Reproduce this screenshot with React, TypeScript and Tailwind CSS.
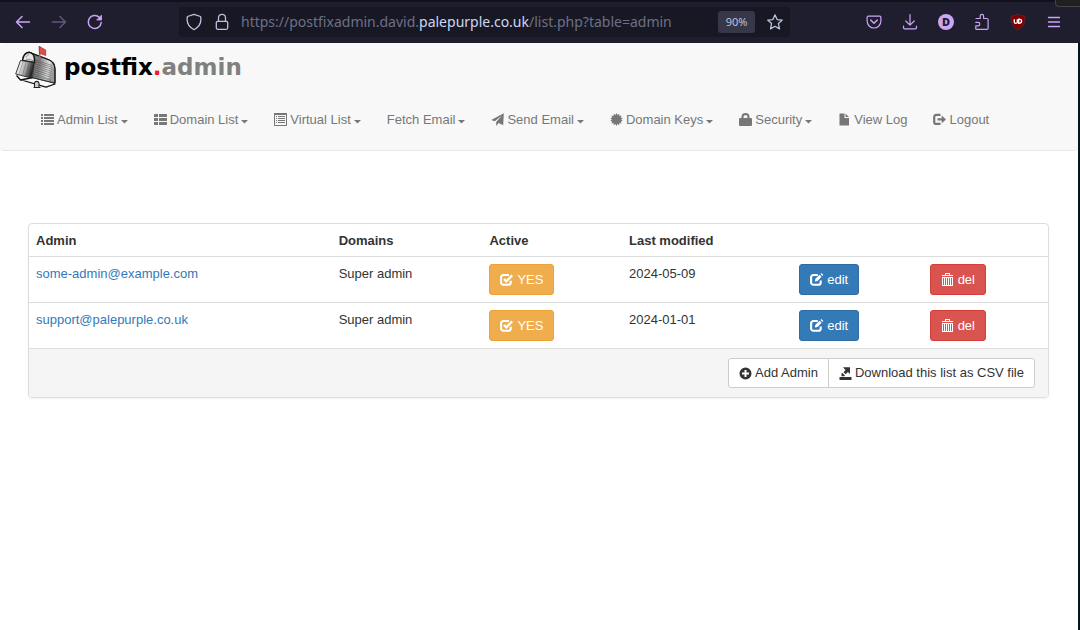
import type { ReactNode } from "react";

type IconName =
  | "list"
  | "thList"
  | "listAlt"
  | "send"
  | "certificate"
  | "lock"
  | "file"
  | "logout"
  | "check"
  | "edit"
  | "trash"
  | "plus"
  | "export";

const burst = Array.from({ length: 28 }, (_, i) => {
  const angle = (i * Math.PI) / 14;
  const r = i % 2 ? 4.6 : 6.5;
  return `${(6.5 + r * Math.sin(angle)).toFixed(2)},${(6.5 - r * Math.cos(angle)).toFixed(2)}`;
}).join(" ");

const glyphs: Record<IconName, ReactNode> = {
  list: (
    <path d="M0 1h2v2H0zM3 1h10v2H3zM0 4h2v2H0zM3 4h10v2H3zM0 7h2v2H0zM3 7h10v2H3zM0 10h2v2H0zM3 10h10v2H3z" />
  ),
  thList: (
    <path d="M.5 1H4v3H0V1.500zM5 1h7.500l.5.5V4H5zM0 5h4v3H0zM5 5h8v3H5zM0 9h4v3H.5L0 11.500zM5 9h8v2.500l-.5.5H5z" />
  ),
  listAlt: (
    <path
      fillRule="evenodd"
      d="M.5 0h12l.5.5v12l-.5.5H.5l-.5-.5V.5zM1 2v10h11V2zM2 3h1v1H2zM4 3h7v1H4zM2 5h1v1H2zM4 5h7v1H4zM2 7h1v1H2zM4 7h7v1H4zM2 9h1v1H2zM4 9h7v1H4z"
    />
  ),
  send: <path d="M12.800.2 12.200 12.200 7.600 10 5.200 12.900V9L11 2.500 3.700 8.300.2 6.900z" />,
  certificate: <polygon points={burst} />,
  lock: (
    <path
      fillRule="evenodd"
      d="M2.500 5V4a4 4 0 0 1 8 0v1h1.700l.8.8v6.400l-.8.8H.8l-.8-.8V5.800L.8 5zM4.500 5h4V4a2 2 0 0 0-4 0z"
    />
  ),
  file: <path d="M1.500.5h5V5H11v7.500H1.500zM7.500.5 11 4H7.500z" />,
  logout: (
    <>
      <path
        d="M7.500 1.900H3.200A2 2 0 0 0 1.200 3.900v5a2 2 0 0 0 2 2h4.300"
        fill="none"
        stroke="currentColor"
        strokeWidth="2.200"
      />
      <path d="M4.500 5.200h4.200V2.500L13 6.400 8.700 10.300V7.600H4.500z" />
    </>
  ),
  check: (
    <>
      <path
        d="M9 2H3.400A2.300 2.300 0 0 0 1.100 4.300v5.200a2.300 2.300 0 0 0 2.300 2.300h5a2.300 2.300 0 0 0 2.300-2.300V7.700"
        fill="none"
        stroke="currentColor"
        strokeWidth="2.100"
      />
      <path d="m4 6 2.300 2.300L12.200 2.400" fill="none" stroke="currentColor" strokeWidth="2.300" />
    </>
  ),
  edit: (
    <>
      <path
        d="M7.800 2H3.400A2.300 2.300 0 0 0 1.100 4.300v5.200a2.300 2.300 0 0 0 2.300 2.300h5a2.300 2.300 0 0 0 2.300-2.300V7.500"
        fill="none"
        stroke="currentColor"
        strokeWidth="2.100"
      />
      <path d="m4.800 8.500.6-2.700 4.200-4.100 2 2-4.100 4.200zM10.500.9l.8-.8 2 2-.8.8z" />
    </>
  ),
  trash: (
    <path
      fillRule="evenodd"
      d="M4 0h5v2h3v1H1V2h3zM5 1v1h3V1zM1 4h11v9H1zM2 5v7h1V5zM4 5v7h1V5zM6 5v7h1V5zM8 5v7h1V5zM10 5v7h1V5z"
    />
  ),
  plus: (
    <path
      fillRule="evenodd"
      d="M6.500.5a6 6 0 1 1 0 12 6 6 0 0 1 0-12zM5.500 3v2.500H3v2h2.500V10h2V7.500H10v-2H7.500V3z"
    />
  ),
  export: (
    <path d="M4 .3h7V7L8.900 5 6.600 7.300l-2-2L6.500 3zM3.200 5.800 6 8.500 5.200 9.300H2.500V6.500zM.5 10h12v3H.5z" />
  ),
};

function Icon({ name }: { name: IconName }) {
  return (
    <svg viewBox="0 0 13 13" className="size-[13px] shrink-0 overflow-visible" fill="currentColor" aria-hidden="true">
      {glyphs[name]}
    </svg>
  );
}

function Caret() {
  return (
    <svg viewBox="0 0 7 4" className="mt-1 h-1 w-[7px]" fill="currentColor" aria-hidden="true">
      <path d="M0 0h7L3.500 3.600z" />
    </svg>
  );
}

const menu: { label: string; icon?: IconName; caret?: boolean }[] = [
  { label: "Admin List", icon: "list", caret: true },
  { label: "Domain List", icon: "thList", caret: true },
  { label: "Virtual List", icon: "listAlt", caret: true },
  { label: "Fetch Email", caret: true },
  { label: "Send Email", icon: "send", caret: true },
  { label: "Domain Keys", icon: "certificate", caret: true },
  { label: "Security", icon: "lock", caret: true },
  { label: "View Log", icon: "file" },
  { label: "Logout", icon: "logout" },
];

const admins = [
  { email: "some-admin@example.com", domains: "Super admin", modified: "2024-05-09" },
  { email: "support@palepurple.co.uk", domains: "Super admin", modified: "2024-01-01" },
];

function ToolButton({ label, children, dim }: { label: string; children: ReactNode; dim?: boolean }) {
  return (
    <button
      type="button"
      aria-label={label}
      disabled={dim}
      className="flex size-9 shrink-0 items-center justify-center text-[#cba6f7] disabled:opacity-40"
    >
      <svg
        viewBox="0 0 16 16"
        className="size-4 overflow-visible"
        fill="none"
        stroke="currentColor"
        strokeWidth="1.200"
        strokeLinecap="round"
        strokeLinejoin="round"
      >
        {children}
      </svg>
    </button>
  );
}

function BrowserBar() {
  return (
    <header className="relative flex h-[43px] items-center border-t-2 border-[#11111b] bg-[#1e1e2e] pr-2 pb-px pl-[5px] font-['Noto_Sans',sans-serif]">
      <div className="absolute -top-0.5 right-0 h-[7px] w-[25px] rounded-bl border-b border-l border-[#454545] bg-[#202020]" />
      <ToolButton label="Back">
        <path d="M14.500 8h-13M7 2.500 1.500 8 7 13.500" strokeWidth="1.500" />
      </ToolButton>
      <ToolButton label="Forward" dim>
        <path d="M1.500 8h13M9 2.500 14.500 8 9 13.500" strokeWidth="1.500" />
      </ToolButton>
      <ToolButton label="Reload">
        <path d="M14.200 8.500A6.500 6.500 0 1 1 12.300 3.300L14 5" strokeWidth="1.500" />
        <path d="M14.500 1.500V6H10z" fill="currentColor" strokeWidth=".8" />
      </ToolButton>
      <div className="ml-[66px] flex h-[30px] w-[611px] items-center rounded bg-[#181825] pr-[7px] pl-[7px] text-[#bac2de]">
        <svg viewBox="0 0 16 16" className="size-4 overflow-visible" fill="none" stroke="currentColor" strokeWidth="1.300" strokeLinejoin="round">
          <path d="M8 .3 14.500 2.500c.3.900.4 2 .4 3 0 4.500-2.800 8-6.900 10.200C3.900 13.500 1.100 10 1.100 5.500c0-1 .1-2.100.4-3z" />
        </svg>
        <svg viewBox="0 0 16 16" className="ml-3 size-4 overflow-visible" fill="none" stroke="currentColor" strokeWidth="1.300">
          <rect x="2.300" y="7.300" width="11.400" height="8" rx="1.500" />
          <path d="M4.500 7.300V3.800a3.500 3.500 0 0 1 7 0v3.500" />
        </svg>
        <div
          role="textbox"
          aria-label="Address"
          tabIndex={0}
          className="ml-[11px] min-w-0 flex-1 pb-px text-sm whitespace-nowrap text-[#6c7086]"
        >
          https://postfixadmin.david.<span className="text-[#cdd6f4]">palepurple.co.uk</span>/list.php?table=admin
        </div>
        <button type="button" className="h-[22px] w-[37px] rounded-[3px] bg-[#363748] text-[11px] text-[#bac2de]">
          90%
        </button>
        <button type="button" aria-label="Bookmark" className="ml-3 flex size-4 items-center">
          <svg viewBox="0 0 16 16" className="size-4 overflow-visible" fill="none" stroke="currentColor" strokeWidth="1.300" strokeLinejoin="round">
            <path d="m8 .8 2.100 4.800 5.200.5-3.900 3.500 1.100 5.300L8 12.300l-4.500 2.600 1.100-5.300L.7 6.100l5.200-.5z" />
          </svg>
        </button>
      </div>
      <div className="ml-auto flex">
        <ToolButton label="Pocket">
          <path d="M2.300 2.200h11.400a1.200 1.200 0 0 1 1.200 1.200v3.700a6.900 6.900 0 0 1-13.800 0V3.400a1.200 1.200 0 0 1 1.200-1.200z" />
          <path d="M4.700 6 8 9.300 11.300 6" strokeWidth="1.500" />
        </ToolButton>
        <ToolButton label="Downloads">
          <path d="M8 .5V11M3.800 7 8 11.200 12.200 7M1.500 12v1.500c0 .8.500 1.300 1.300 1.300h10.400c.8 0 1.300-.5 1.300-1.300V12" />
        </ToolButton>
        <button type="button" aria-label="Profile D" className="flex size-9 items-center justify-center">
          <span className="flex size-4 items-center justify-center rounded-full bg-[#cba6f7] text-[11px] leading-4 font-black text-[#1e1e2e]">
            D
          </span>
        </button>
        <ToolButton label="Extensions">
          <path d="M2 4.500h4.200V2a1.700 1.700 0 0 1 3.400 0v2.500h3.300c.7 0 1.200.5 1.200 1.200v8.500c0 .7-.5 1.200-1.200 1.200H2.500c-.4 0-.7-.3-.7-.7v-2.900h2.300a1.700 1.700 0 0 0 0-3.400H1.800" />
        </ToolButton>
        <button type="button" aria-label="Content blocker" className="flex size-9 items-center justify-center">
          <svg viewBox="0 0 16 16" className="size-4 overflow-visible">
            <path d="M8 0c2 1.300 4.300 1.900 7 2 0 6.500-.5 10-7 14C1.500 12 1 8.500 1 2c2.700-.1 5-.7 7-2z" fill="#800000" stroke="#5b3344" strokeWidth=".6" />
            <path d="M4.300 5.200v3c0 1.500 3 1.500 3 0v-3M8.700 5.200v4.100c3.900 0 3.900-4.100 0-4.100z" fill="none" stroke="#fff" strokeWidth="1.300" />
          </svg>
        </button>
        <ToolButton label="Menu">
          <path d="M2.500 3.500h11M2.500 8h11M2.500 12.500h11" strokeWidth="1.300" />
        </ToolButton>
      </div>
    </header>
  );
}

function Mailbox() {
  return (
    <svg viewBox="0 0 42 44" className="h-11 w-[42px] shrink-0" aria-hidden="true">
      <defs>
        <linearGradient id="door" x1="0" x2="1" y1="0" y2=".3">
          <stop offset="0" stopColor="#666" />
          <stop offset=".25" stopColor="#f0f0f0" />
          <stop offset=".6" stopColor="#aaa" />
          <stop offset="1" stopColor="#222" />
        </linearGradient>
        <linearGradient id="side" x1="0" x2="1" y1=".1" y2=".3">
          <stop offset="0" stopColor="#666" />
          <stop offset=".45" stopColor="#888" />
          <stop offset=".8" stopColor="#ddd" />
          <stop offset="1" stopColor="#999" />
        </linearGradient>
      </defs>
      <path d="M1.500 30.500 5.500 35 18 32.500 38 37.500 40 39 31 42.200 6.500 35" fill="#fafafa" stroke="#111" strokeWidth="1.300" strokeLinejoin="round" />
      <path d="M14 7.200 32 14c6 2 8 5 8 10v14L17.500 32.500 19 17C20 12 18 8 14 7.200z" fill="url(#side)" stroke="#333" strokeWidth=".9" />
      <path
        d="M19 14.500l18 6M19.500 16.500l18 6M19.500 18.500l18 6M19 20.500l18 6M19 22.500l18 6M18.500 24.500l18 6M18.500 26.500l18 6M18 28.500l18 6M18 30.500l18 5"
        stroke="#222"
        strokeWidth=".6"
        strokeOpacity=".6"
      />
      <path d="M14 7.200 32 14c6 2 8 5 8 10v14" fill="none" stroke="#111" strokeWidth="1.200" />
      <path d="M7.500 15.500C8 11 10.500 7.500 14 7.200 18 7.500 20 11 19.500 17.500z" fill="#e5e5e5" stroke="#111" strokeWidth="1.400" />
      <path d="M11 12.500c.5-1.500 1.500-2.500 3-3M11 15c2-1 5-1 8 1.500" fill="none" stroke="#777" strokeWidth=".8" />
      <path d="M5.500 15.500 19 17.500 16.500 33 .7 29z" fill="url(#door)" stroke="#222" strokeWidth=".9" />
      <path d="M8 17 4 29M11 17.500 7.500 30M14 18l-3 13M16.500 18.500 14 32" stroke="#333" strokeWidth=".3" />
      <path d="M19.500 42.500v-4.300c.5-2.400 4-2.400 4.500 0v4.300M18.500 42.500h7" fill="#ccc" stroke="#222" strokeWidth="1.100" />
      <path d="M24.700 23V1.500" stroke="#9c6464" strokeWidth="1.600" />
      <path d="M24 1.300 30.700 5v5.500L24.500 8.300z" fill="#e04c4c" stroke="#843838" strokeWidth=".7" />
    </svg>
  );
}

const buttonBase = "inline-flex h-[31px] items-center gap-1 rounded-[3px] border px-2.5 align-top text-white";
const listButton =
  "inline-flex h-[30px] items-center gap-[3px] border border-[#cccccc] bg-white px-2.5 text-[#333333]";

export default function App() {
  return (
    <div className="min-h-screen bg-white font-['Liberation_Sans',Arial,sans-serif] text-[13px] leading-[18px] text-[#333333]">
      <BrowserBar />
      <div className="flex min-h-[calc(100vh-43px)] flex-col border-r-2 border-[#04161c]">
        <nav className="rounded border-b border-[#e7e7e7] bg-[#f8f8f8] pb-[5px]">
          <a href="#home" className="ml-[15px] inline-flex h-[45px] items-center gap-[7px] pt-0.5">
            <Mailbox />
            <span className="font-['DejaVu_Sans',sans-serif] text-[23px] leading-7 font-bold text-black">
              postfix<span className="text-[#ed1c24]">.</span>
              <span className="text-[#808080]">admin</span>
            </span>
          </a>
          <ul className="ml-7 flex flex-wrap">
            {menu.map(({ label, icon, caret }) => (
              <li key={label}>
                <a
                  href="#menu"
                  className="flex items-center gap-[3px] px-[13px] pt-[17px] pb-4 whitespace-nowrap text-[#777777]"
                >
                  {icon && <Icon name={icon} />}
                  {label}
                  {caret && <Caret />}
                </a>
              </li>
            ))}
          </ul>
        </nav>
        <main className="mt-[72px] mr-[29px] ml-7 overflow-hidden rounded border border-[#dddddd] shadow-xs">
          <table className="w-full table-fixed border-collapse text-left">
            <colgroup>
              <col className="w-[29.700%]" />
              <col className="w-[14.800%]" />
              <col className="w-[13.700%]" />
              <col className="w-[16.700%]" />
              <col className="w-[12.800%]" />
              <col />
            </colgroup>
            <thead>
              <tr className="h-[33px]">
                <th className="px-[7px] pt-0.5">Admin</th>
                <th className="px-[7px] pt-0.5">Domains</th>
                <th className="px-[7px] pt-0.5">Active</th>
                <th className="px-[7px] pt-0.5">Last modified</th>
                <td />
                <td />
              </tr>
            </thead>
            <tbody>
              {admins.map((admin) => (
                <tr key={admin.email} className="border-t border-[#dddddd] align-top">
                  <td className="px-[7px] pt-2">
                    <a href="#admin" className="text-[#337ab7]">
                      {admin.email}
                    </a>
                  </td>
                  <td className="px-[7px] pt-2">{admin.domains}</td>
                  <td className="p-[7px]">
                    <button type="button" className={`${buttonBase} border-[#eea236] bg-[#f0ad4e]`}>
                      <Icon name="check" />
                      YES
                    </button>
                  </td>
                  <td className="px-[7px] pt-2">{admin.modified}</td>
                  <td className="p-[7px]">
                    <button type="button" className={`${buttonBase} border-[#2e6da4] bg-[#337ab7]`}>
                      <Icon name="edit" />
                      edit
                    </button>
                  </td>
                  <td className="p-[7px]">
                    <button type="button" className={`${buttonBase} border-[#d43f3a] bg-[#d9534f]`}>
                      <Icon name="trash" />
                      del
                    </button>
                  </td>
                </tr>
              ))}
            </tbody>
          </table>
          <div className="flex justify-end border-t border-[#dddddd] bg-[#f5f5f5] px-[13px] py-[9px]">
            <button type="button" className={`${listButton} rounded-l-[3px]`}>
              <Icon name="plus" />
              Add Admin
            </button>
            <button type="button" className={`${listButton} -ml-px rounded-r-[3px]`}>
              <Icon name="export" />
              Download this list as CSV file
            </button>
          </div>
        </main>
      </div>
    </div>
  );
}
